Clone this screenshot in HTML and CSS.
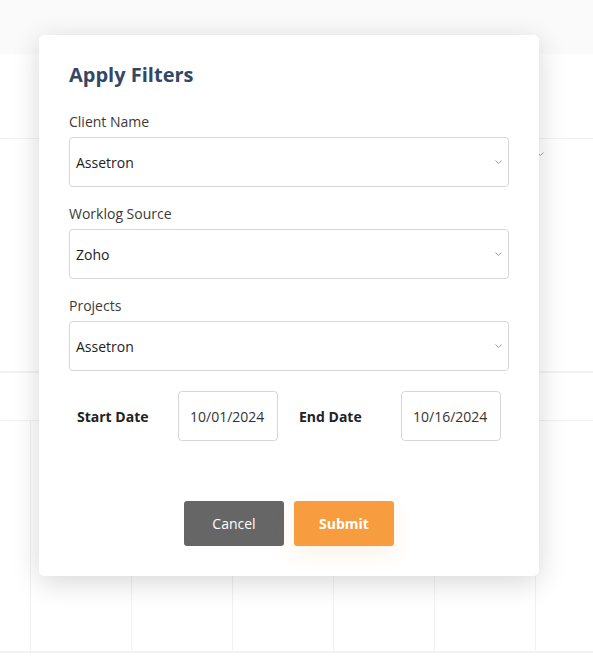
FILE: index.html
```html
<!DOCTYPE html>
<html lang="en">
<head>
<meta charset="utf-8">
<title>Apply Filters</title>
<link rel="stylesheet" href="styles.css">
</head>
<body>
<div class="page">
  <div class="topbar"></div>
  <div class="panel">
    <div class="panel-head"></div>
    <div class="panel-row">
      <svg class="bg-chevron" width="7" height="4" viewBox="0 0 7 4"><path d="M0.5 0.5 L3.5 3.5 L6.5 0.5" fill="none" stroke="#aaa" stroke-width="1"/></svg>
    </div>
  </div>
  <div class="divider"></div>
  <div class="table-head"></div>
  <div class="table-grid">
    <div class="cell"></div>
    <div class="cell"></div>
    <div class="cell"></div>
    <div class="cell"></div>
    <div class="cell"></div>
    <div class="cell"></div>
  </div>
  <div class="bottom-line"></div>

  <div class="modal">
    <h2 class="modal-title">Apply Filters</h2>

    <div class="field">
      <div class="field-label">Client Name</div>
      <div class="select">
        <span>Assetron</span>
        <svg class="chevron" width="7" height="4" viewBox="0 0 7 4"><path d="M0.5 0.5 L3.5 3.5 L6.5 0.5" fill="none" stroke="#999" stroke-width="1"/></svg>
      </div>
    </div>

    <div class="field">
      <div class="field-label">Worklog Source</div>
      <div class="select">
        <span>Zoho</span>
        <svg class="chevron" width="7" height="4" viewBox="0 0 7 4"><path d="M0.5 0.5 L3.5 3.5 L6.5 0.5" fill="none" stroke="#999" stroke-width="1"/></svg>
      </div>
    </div>

    <div class="field">
      <div class="field-label">Projects</div>
      <div class="select">
        <span>Assetron</span>
        <svg class="chevron" width="7" height="4" viewBox="0 0 7 4"><path d="M0.5 0.5 L3.5 3.5 L6.5 0.5" fill="none" stroke="#999" stroke-width="1"/></svg>
      </div>
    </div>

    <div class="date-row">
      <div class="date-label">Start Date</div>
      <div class="date-input">10/01/2024</div>
      <div class="date-label end">End Date</div>
      <div class="date-input">10/16/2024</div>
    </div>

    <div class="actions">
      <button class="btn btn-cancel" type="button">Cancel</button>
      <button class="btn btn-submit" type="button">Submit</button>
    </div>
  </div>
</div>
</body>
</html>
```

FILE: styles.css
```css
* {
  box-sizing: border-box;
}

html, body {
  margin: 0;
  padding: 0;
  background: #ffffff;
}

body {
  font-family: "Open Sans", "Liberation Sans", sans-serif;
  color: #333333;
}

.page {
  position: relative;
  width: 593px;
  height: 668px;
  overflow: hidden;
  background: #ffffff;
}

/* background page */
.topbar {
  height: 54px;
  background: #fafafa;
}

.panel {
  height: 317px;
  background: #ffffff;
}

.panel-head {
  height: 85px;
  border-bottom: 1px solid #f1f1f1;
}

.panel-row {
  display: flex;
  justify-content: flex-end;
  padding: 13px 49px 0 0;
}

.bg-chevron {
  display: block;
}

.divider {
  height: 2px;
  background: #f3f3f3;
}

.table-head {
  height: 48px;
  border-bottom: 1px solid #f1f1f1;
}

.table-grid {
  display: grid;
  grid-template-columns: repeat(6, 101px);
  padding-left: 30px;
  height: 230px;
}

.cell {
  border-left: 1px solid #f1f1f1;
}

.bottom-line {
  height: 2px;
  background: #f3f3f3;
}

/* modal */
.modal {
  position: absolute;
  left: 39px;
  top: 35px;
  width: 500px;
  padding: 28px 30px 30px;
  background: #ffffff;
  border-radius: 5px;
  box-shadow: 0 6px 28px rgba(0, 0, 0, 0.16);
}

.modal-title {
  margin: 0 0 24px;
  font-size: 20px;
  line-height: 24px;
  font-weight: 700;
  color: #344763;
}

.field {
  margin-bottom: 16px;
}

.field-label {
  font-size: 14px;
  line-height: 21px;
  color: #3a3a3a;
  margin-bottom: 5px;
}

.select {
  display: flex;
  align-items: center;
  justify-content: space-between;
  height: 50px;
  padding: 0 6px;
  border: 1px solid #d6d6d6;
  border-radius: 4px;
  font-size: 14px;
  color: #222222;
}

.chevron {
  display: block;
  margin-top: -1px;
}

.date-row {
  display: flex;
  align-items: center;
  padding-left: 8px;
  margin-top: 20px;
}

.date-label {
  width: 101px;
  font-size: 14px;
  font-weight: 700;
  color: #222222;
}

.date-label.end {
  width: 102px;
  margin-left: 21px;
}

.date-input {
  display: flex;
  align-items: center;
  width: 100px;
  height: 50px;
  padding-left: 11px;
  border: 1px solid #d6d6d6;
  border-radius: 4px;
  font-size: 14px;
  color: #333333;
}

.actions {
  display: flex;
  justify-content: center;
  gap: 10px;
  margin-top: 60px;
}

.btn {
  width: 100px;
  height: 45px;
  border: none;
  border-radius: 3px;
  font-family: "Open Sans", "Liberation Sans", sans-serif;
  font-size: 14px;
  color: #ffffff;
  cursor: pointer;
}

.btn-cancel {
  background: #666666;
  font-weight: 400;
}

.btn-submit {
  background: #f89c40;
  font-weight: 700;
  box-shadow: 0 8px 20px rgba(248, 156, 64, 0.12);
}
```
